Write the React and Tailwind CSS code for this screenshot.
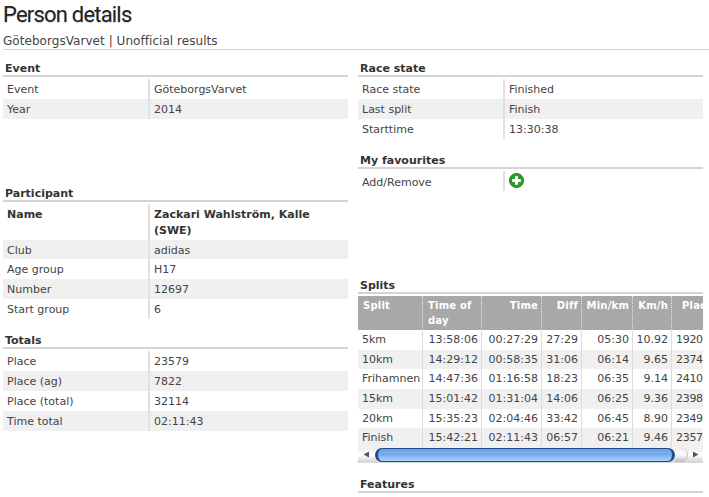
const FONT = "font-['DejaVu_Sans',sans-serif]";

function SectionTitle({ children }) {
  return (
    <div className="h-[17px] border-b-2 border-[#d4d4d4] pt-[2px] pl-[2px] text-[11px] leading-[13px] font-bold text-[#333]">
      {children}
    </div>
  );
}

function Row({ label, value, alt, bold, tall, rowH = "h-5", labelPad = "pt-[3px]" }) {
  return (
    <div className={`flex ${tall ? "h-9" : rowH} ${alt ? "bg-[#f0f0f0]" : ""} ${bold ? "font-bold text-[#333]" : ""}`}>
      <div className={`w-[147px] border-r-2 border-[#e0e0e0] pl-1 ${labelPad} leading-[16px]`}>{label}</div>
      <div className="flex-1 pl-1 pr-8 pt-[3px] leading-[16px]">{value}</div>
    </div>
  );
}

function Section({ title, className = "", children }) {
  return (
    <section className={className}>
      <SectionTitle>{title}</SectionTitle>
      <div className="pt-[2px] text-[11px] text-[#444]">{children}</div>
    </section>
  );
}

const splits = [
  ["5km", "13:58:06", "00:27:29", "27:29", "05:30", "10.92", "1920"],
  ["10km", "14:29:12", "00:58:35", "31:06", "06:14", "9.65", "2374"],
  ["Frihamnen", "14:47:36", "01:16:58", "18:23", "06:35", "9.14", "2410"],
  ["15km", "15:01:42", "01:31:04", "14:06", "06:25", "9.36", "2398"],
  ["20km", "15:35:23", "02:04:46", "33:42", "06:45", "8.90", "2349"],
  ["Finish", "15:42:21", "02:11:43", "06:57", "06:21", "9.46", "2357"],
];

const colW = ["w-[65px]", "w-[59px]", "w-[60px]", "w-[40px]", "w-[51px]", "w-[39px]", "w-[40px]"];

function SplitsTable() {
  return (
    <div className="overflow-hidden">
      <div className="w-[354px]">
        <div className="flex h-[34px] bg-[#a8a8a8] text-[10px] leading-[15px] font-bold tracking-[0.2px] text-white">
          {["Split", "Time of day", "Time", "Diff", "Min/km", "Km/h", "Place"].map((h, i) => (
            <div
              key={h}
              className={`${colW[i]} ${i < 2 ? "pl-[5px] text-left" : "pr-[3px] text-right"} ${i === 6 ? "pl-[10px] text-left" : "border-r border-dotted border-[#e8e8e8]"} pt-[2px]`}
            >
              {h}
            </div>
          ))}
        </div>
        {splits.map((r, ri) => (
          <div key={r[0]} className={`flex h-[19.67px] text-[11px] leading-[16px] text-[#444] ${ri % 2 ? "bg-[#f0f0f0]" : ""}`}>
            {r.map((c, i) => (
              <div
                key={i}
                className={`${colW[i]} ${i === 0 ? "pl-1 text-left" : i === 6 ? "pl-1 text-left tracking-[-0.3px]" : "pr-[3px] text-right"} ${i < 6 ? "border-r border-[#dcdcdc]" : ""} pt-[2px] whitespace-nowrap`}
              >
                {c}
              </div>
            ))}
          </div>
        ))}
      </div>
    </div>
  );
}

function Scrollbar() {
  return (
    <div className="flex h-[15px] items-stretch border-b border-[#d8d8d8] bg-gradient-to-b from-[#ececec] via-[#ffffff] to-[#d4d4d4]">
      <div className="flex w-[17px] items-center justify-center">
        <svg width="7" height="7" viewBox="0 0 7 7">
          <path d="M6 0.5V6.5L0.5 3.5Z" fill="#555" />
        </svg>
      </div>
      <div className="flex w-[300px] items-center rounded-full border border-r-[3px] border-l-[3px] border-[#1f4a8c] bg-gradient-to-b from-[#6f9fe4] via-[#7fb0ee] to-[#a9d2fa] px-[2px]">
        <div className="h-0 w-full border-t border-dotted border-[#6b9ce2]" />
      </div>
      <div className="w-[13px] rounded-r-full border-r border-[#bdbdbd] bg-gradient-to-b from-[#f0f0f0] via-[#fafafa] to-[#bbbbbb]" />
      <div className="flex flex-1 items-center justify-center">
        <svg width="7" height="7" viewBox="0 0 7 7">
          <path d="M1 0.5V6.5L6.5 3.5Z" fill="#555" />
        </svg>
      </div>
    </div>
  );
}

function AddIcon() {
  return (
    <svg width="15" height="15" viewBox="0 0 15 15" className="-mt-[1px]">
      <circle cx="7.5" cy="7.5" r="7" fill="#2f9a2a" stroke="#1f7a1e" strokeWidth="1" />
      <path d="M6 3.2H9V6H11.8V9H9V11.8H6V9H3.2V6H6Z" fill="#fff" />
    </svg>
  );
}

export default function App() {
  return (
    <div className={`${FONT} h-[497px] w-[709px] overflow-hidden bg-white pl-[3px]`}>
      <h1 className="h-[30px] pt-[2px] font-['Roboto',sans-serif] text-[22px] leading-[26px] font-normal tracking-[-0.8px] text-[#222] [text-shadow:0_1px_1px_rgba(0,0,0,0.2)]">
        Person details
      </h1>
      <div className="h-[20px] border-b border-[#d4d4d4] pt-[4px] text-[12px] leading-[15px] tracking-[0.05px] text-[#444]">
        GöteborgsVarvet | Unofficial results
      </div>

      <div className="flex gap-[10px] pt-[10px]">
        <div className="w-[345px]">
          <Section title="Event" className="h-[125px]">
            <Row label="Event" value="GöteborgsVarvet" />
            <Row label="Year" value="2014" alt />
          </Section>
          <Section title="Participant" className="h-[147px]">
            <Row label="Name" value="Zackari Wahlström, Kalle (SWE)" bold tall />
            <Row label="Club" value="adidas" alt rowH="h-[19px]" />
            <Row label="Age group" value="H17" />
            <Row label="Number" value="12697" alt />
            <Row label="Start group" value="6" />
          </Section>
          <Section title="Totals">
            <Row label="Place" value="23579" />
            <Row label="Place (ag)" value="7822" alt />
            <Row label="Place (total)" value="32114" />
            <Row label="Time total" value="02:11:43" alt />
          </Section>
        </div>

        <div className="w-[345px]">
          <Section title="Race state" className="h-[92px]">
            <Row label="Race state" value="Finished" />
            <Row label="Last split" value="Finish" alt />
            <Row label="Starttime" value="13:30:38" />
          </Section>
          <Section title="My favourites" className="h-[125px]">
            <Row label="Add/Remove" value={<AddIcon />} labelPad="pt-[4px]" />
          </Section>
          <Section title="Splits" className="h-[199px]">
            <SplitsTable />
            <Scrollbar />
          </Section>
          <SectionTitle>Features</SectionTitle>
        </div>
      </div>
    </div>
  );
}
